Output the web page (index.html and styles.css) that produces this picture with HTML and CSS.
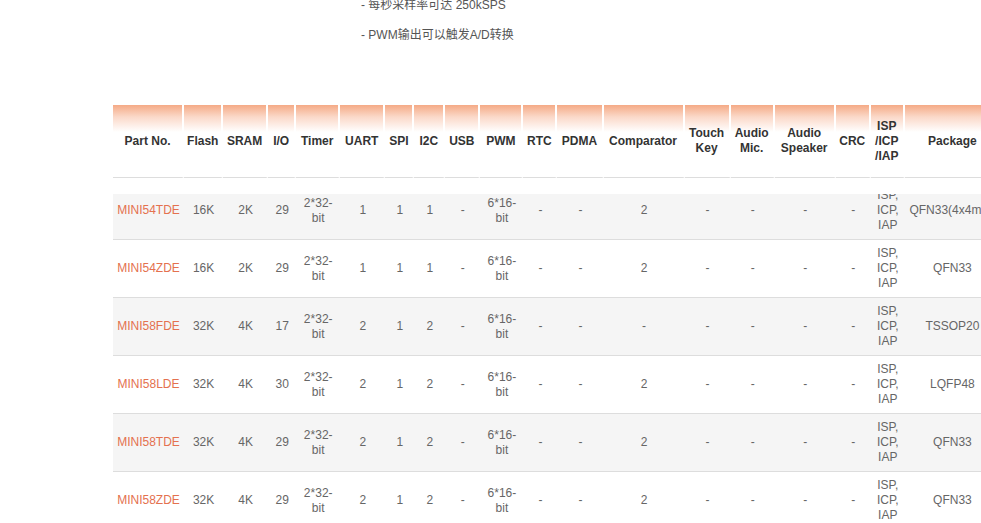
FILE: index.html
```html
<!DOCTYPE html>
<html lang="zh">
<head>
<meta charset="utf-8">
<title>Mini5x</title>
<link rel="stylesheet" href="styles.css">
</head>
<body>
<div class="page">
  <div class="intro">
    <p>- 每秒采样率可达 250kSPS</p>
    <p>- PWM输出可以触发A/D转换</p>
  </div>
  <div class="spec">
    <table class="grid head">
      <colgroup>
        <col class="c-part"><col class="c-flash"><col class="c-sram"><col class="c-io"><col class="c-timer"><col class="c-uart"><col class="c-spi"><col class="c-i2c"><col class="c-usb"><col class="c-pwm"><col class="c-rtc"><col class="c-pdma"><col class="c-comp"><col class="c-touch"><col class="c-mic"><col class="c-spk"><col class="c-crc"><col class="c-isp"><col class="c-pkg">
      </colgroup>
      <thead>
        <tr>
          <th>Part No.</th><th>Flash</th><th>SRAM</th><th>I/O</th><th>Timer</th><th>UART</th><th>SPI</th><th>I2C</th><th>USB</th><th>PWM</th><th>RTC</th><th>PDMA</th><th>Comparator</th><th>Touch Key</th><th>Audio Mic.</th><th>Audio Speaker</th><th>CRC</th><th>ISP /ICP /IAP</th><th>Package</th>
        </tr>
      </thead>
    </table>
    <div class="body-clip">
      <table class="grid body">
        <colgroup>
          <col class="c-part"><col class="c-flash"><col class="c-sram"><col class="c-io"><col class="c-timer"><col class="c-uart"><col class="c-spi"><col class="c-i2c"><col class="c-usb"><col class="c-pwm"><col class="c-rtc"><col class="c-pdma"><col class="c-comp"><col class="c-touch"><col class="c-mic"><col class="c-spk"><col class="c-crc"><col class="c-isp"><col class="c-pkg">
        </colgroup>
        <tbody>
          <tr class="alt">
            <td><a class="part">MINI54TDE</a></td><td>16K</td><td>2K</td><td>29</td><td>2*32-bit</td><td>1</td><td>1</td><td>1</td><td>-</td><td>6*16-bit</td><td>-</td><td>-</td><td>2</td><td>-</td><td>-</td><td>-</td><td>-</td><td>ISP, ICP, IAP</td><td>QFN33(4x4mm)</td>
          </tr>
          <tr>
            <td><a class="part">MINI54ZDE</a></td><td>16K</td><td>2K</td><td>29</td><td>2*32-bit</td><td>1</td><td>1</td><td>1</td><td>-</td><td>6*16-bit</td><td>-</td><td>-</td><td>2</td><td>-</td><td>-</td><td>-</td><td>-</td><td>ISP, ICP, IAP</td><td>QFN33</td>
          </tr>
          <tr class="alt">
            <td><a class="part">MINI58FDE</a></td><td>32K</td><td>4K</td><td>17</td><td>2*32-bit</td><td>2</td><td>1</td><td>2</td><td>-</td><td>6*16-bit</td><td>-</td><td>-</td><td>-</td><td>-</td><td>-</td><td>-</td><td>-</td><td>ISP, ICP, IAP</td><td>TSSOP20</td>
          </tr>
          <tr>
            <td><a class="part">MINI58LDE</a></td><td>32K</td><td>4K</td><td>30</td><td>2*32-bit</td><td>2</td><td>1</td><td>2</td><td>-</td><td>6*16-bit</td><td>-</td><td>-</td><td>2</td><td>-</td><td>-</td><td>-</td><td>-</td><td>ISP, ICP, IAP</td><td>LQFP48</td>
          </tr>
          <tr class="alt">
            <td><a class="part">MINI58TDE</a></td><td>32K</td><td>4K</td><td>29</td><td>2*32-bit</td><td>2</td><td>1</td><td>2</td><td>-</td><td>6*16-bit</td><td>-</td><td>-</td><td>2</td><td>-</td><td>-</td><td>-</td><td>-</td><td>ISP, ICP, IAP</td><td>QFN33</td>
          </tr>
          <tr>
            <td><a class="part">MINI58ZDE</a></td><td>32K</td><td>4K</td><td>29</td><td>2*32-bit</td><td>2</td><td>1</td><td>2</td><td>-</td><td>6*16-bit</td><td>-</td><td>-</td><td>2</td><td>-</td><td>-</td><td>-</td><td>-</td><td>ISP, ICP, IAP</td><td>QFN33</td>
          </tr>
        </tbody>
      </table>
    </div>
  </div>
</div>
</body>
</html>
```
FILE: styles.css
```css
html, body {
  margin: 0;
  padding: 0;
  background: #fff;
  overflow: hidden;
}
.page {
  width: 981px;
  height: 523px;
  overflow: hidden;
  font-family: "Liberation Sans", "Noto Sans CJK SC", sans-serif;
  font-size: 12px;
  color: #666;
}
.intro {
  margin-top: -4px;
  padding-left: 361px;
  color: #555;
}
.intro p {
  margin: 0 0 12px;
  line-height: 18px;
}
.spec {
  margin-top: 61px;
  margin-left: 113px;
  width: 887px;
}
.grid {
  width: 887px;
  table-layout: fixed;
  border-collapse: separate;
  border-spacing: 0;
}
.grid th, .grid td {
  box-sizing: border-box;
  text-align: center;
  vertical-align: middle;
  padding: 0 3px;
  line-height: 15px;
}
.head th {
  height: 73px;
  font-weight: bold;
  color: #333;
  background: linear-gradient(to bottom, #f5aa86 0, #fbd9c9 12px, #fff 27px);
  border-right: 2px solid #fff;
  border-bottom: 1px solid #ddd;
}
.head th:last-child {
  border-right: 0;
}
.body-clip {
  margin-top: 16px;
  height: 400px;
  overflow: hidden;
}
.body {
  margin-top: -12px;
}
.body td {
  height: 58px;
  border-bottom: 1px solid #ddd;
  white-space: normal;
}
.body tr.alt td {
  background: #f5f5f5;
}
.part {
  color: #e4714f;
  text-decoration: none;
  white-space: nowrap;
}
.c-part { width: 71px; }
.c-flash { width: 39px; }
.c-sram { width: 45px; }
.c-io { width: 28px; }
.c-timer { width: 44px; }
.c-uart { width: 45px; }
.c-spi { width: 29px; }
.c-i2c { width: 31px; }
.c-usb { width: 35px; }
.c-pwm { width: 43px; }
.c-rtc { width: 34px; }
.c-pdma { width: 46px; }
.c-comp { width: 81px; }
.c-touch { width: 46px; }
.c-mic { width: 44px; }
.c-spk { width: 61px; }
.c-crc { width: 35px; }
.c-isp { width: 34px; }
.c-pkg { width: 95px; }
```
